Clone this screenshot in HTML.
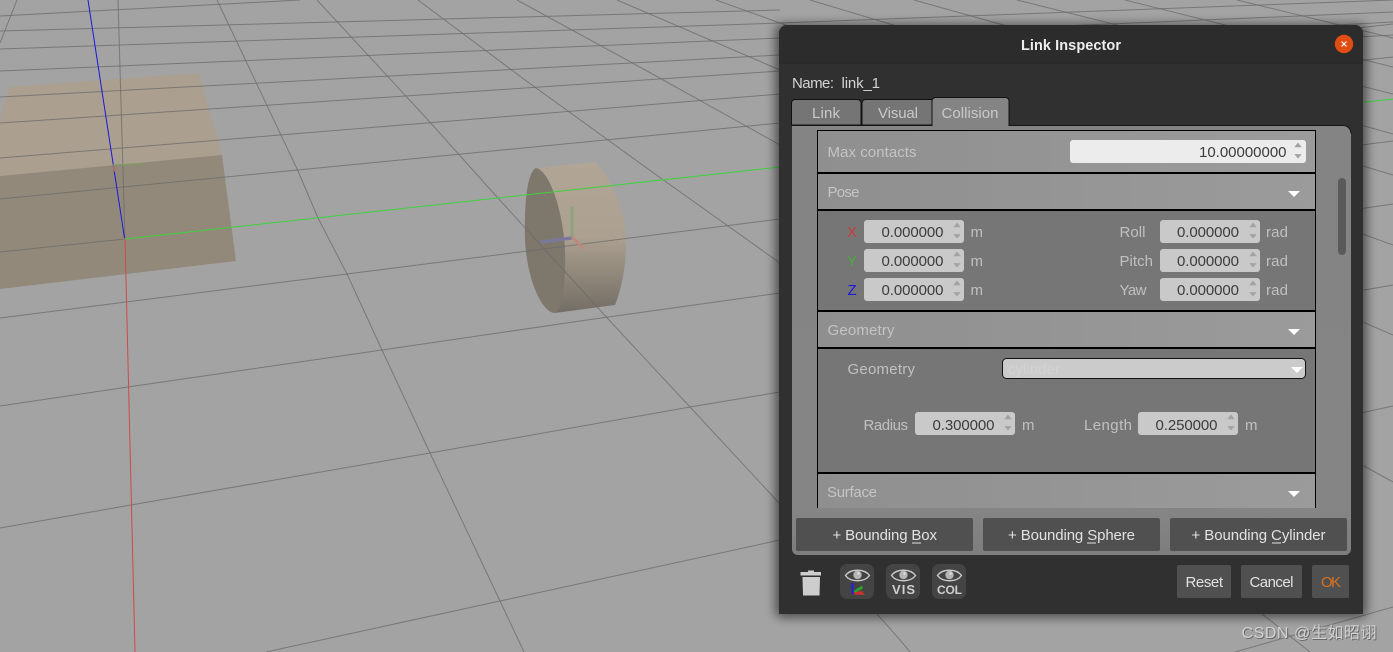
<!DOCTYPE html>
<html><head><meta charset="utf-8"><style>
html,body{margin:0;padding:0;background:#a3a3a3;overflow:hidden}
svg{display:block;position:absolute;left:0;top:0}
text{font-family:"Liberation Sans","Noto Sans CJK SC",sans-serif;font-size:15px}
</style></head><body>
<svg width="1393" height="652" viewBox="0 0 1393 652" xmlns="http://www.w3.org/2000/svg">
<defs>
<linearGradient id="cyl" x1="0" y1="0" x2="0" y2="1"><stop offset="0" stop-color="#b1a595"/><stop offset=".5" stop-color="#aca090"/><stop offset=".78" stop-color="#8c8477"/><stop offset="1" stop-color="#736d65"/></linearGradient>
<linearGradient id="hd" x1="0" y1="0" x2="1" y2="0"><stop offset="0" stop-color="#8f8f8f"/><stop offset="1" stop-color="#9b9b9b"/></linearGradient>
<linearGradient id="pane" x1="0" y1="0" x2="0" y2="1"><stop offset="0" stop-color="#848484"/><stop offset=".9" stop-color="#858585"/><stop offset="1" stop-color="#7d7d7d"/></linearGradient>
<filter id="blur" x="-10%" y="-10%" width="120%" height="120%"><feGaussianBlur stdDeviation="5"/></filter>
<g id="ar"><polygon points="-3.7,-4.3 3.7,-4.3 0,-9" fill="#a2a2a2"/><polygon points="-3.7,2.6 3.7,2.6 0,7" fill="#a2a2a2"/></g>
<polygon id="tri" points="-6,0 6,0 0,6" fill="#fff"/>
<g id="eye"><path d="M-12,0C-7,-7 7,-7 12,0C7,7 -7,7 -12,0Z" fill="none" stroke="#c9c9c9" stroke-width="1.4"/><circle cx="0" cy="-.5" r="4.2" fill="#b5b5b5"/><circle cx="1" cy="-2" r="1.2" fill="#e2e2e2"/></g>
</defs>

<rect width="1393" height="652" fill="#a3a3a3"/>

<!-- box -->
<polygon points="9,87 199,73 222,155 0,176 0,119" fill="#ab9f8f"/>
<polygon points="222,155 236,261 0,289 0,176" fill="#93897b"/>

<!-- cylinder -->
<path d="M536,168L595,162C611,178 626,212 626,242C626,268 621,290 615,305L555,313Z" fill="url(#cyl)"/>
<path d="M536,168C527,172 524,205 525,240C527,280 542,313 555,313C563,310 566,280 565,250C563,210 549,170 536,168Z" fill="#7e776c"/>

<!-- grid -->
<g stroke="#6a6a6a" stroke-width="1" stroke-opacity=".75" fill="none">
<path d="M0,16L300,0"/>
<path d="M0,31L780,10"/>
<path d="M0,49L780,23L1393,0"/>
<path d="M0,71L780,38L1393,12"/>
<path d="M0,97L780,55L1393,22"/>
<path d="M0,123L780,71L1393,35"/>
<path d="M0,158L780,94L1393,24"/>
<path d="M0,199L780,123L1393,57"/>
<path d="M0,252L125,239"/>
<path d="M0,318L126,302L347,274L780,219L1393,141"/>
<path d="M0,406L128,387L382,350L587,320L780,293L1393,204"/>
<path d="M0,528L131,505L430,453L690,407L780,392L1393,285"/>
<path d="M266,652L500,601L780,540L1393,406"/>
<path d="M1235,652L1393,607"/>
<path d="M118,0L125,239"/>
<path d="M17,0L0,43"/>
<path d="M217,0L298,171L318,218L347,274L382,350L430,453L500,601L524,652"/>
<path d="M317,0L428,120L497,197L609,320L690,407L780,504L900,640L910,652"/>
<path d="M418,0L525,80L662,179L780,263L1252,606L1310,652"/>
<path d="M517,0L647,71L746,126L780,145L1393,482"/>
<path d="M617,0L780,70L1393,335"/>
<path d="M716,0L780,23L1393,245"/>
<path d="M810,0L1393,175"/>
<path d="M914,0L1393,134"/>
<path d="M1017,0L1393,94"/>
<path d="M1125,0L1393,67"/>
<path d="M1237,0L1393,38"/>
</g>

<!-- axes -->
<path d="M88,0L124.5,238" stroke="#1818e0" stroke-width="1" fill="none"/>
<path d="M125,238L135,652" stroke="#cf4a4a" stroke-width="1" fill="none"/>
<path d="M125,239L780,167L1393,99" stroke="#3ed23e" stroke-width="1" fill="none"/>
<path d="M113,165L142,164" stroke="#7f9a64" stroke-width="1.5"/>
<path d="M113,166L115,172" stroke="#b36a60" stroke-width="1.2"/>
<path d="M572,206L572,237" stroke="#8ea27c" stroke-width="3"/>
<path d="M541,242L572,238" stroke="#7a789c" stroke-width="3.2"/>
<path d="M572,237L584,249" stroke="#bb8a7c" stroke-width="3"/>

<!-- dialog shadow and body -->
<rect x="775" y="24" width="592" height="594" rx="8" fill="#000" opacity=".5" filter="url(#blur)"/>
<path d="M779,614V33a8,8 0 0 1 8,-8H1355a8,8 0 0 1 8,8V614Z" fill="#303030"/>
<path d="M779,63V33a8,8 0 0 1 8,-8H1355a8,8 0 0 1 8,8V63Z" fill="#2c2c2c"/>
<rect x="779" y="62.500" width="584" height="1" fill="#262626"/>
<text x="1021" y="50" textLength="100" fill="#eeeeee" style="font-weight:bold;font-size:14.500px">Link Inspector</text>
<circle cx="1344" cy="44" r="9.200" fill="#e14c14"/>
<path d="M1341.500,41.500L1346.500,46.500M1346.500,41.500L1341.500,46.500" stroke="#fff" stroke-width="1.2"/>

<text x="792" y="88" textLength="42" fill="#d4d4d4">Name:</text>
<text x="841.500" y="88" textLength="38.500" fill="#d4d4d4">link_1</text>

<!-- tabs -->
<path d="M791.500,125V103a3.500,3.500 0 0 1 3.500,-3.500H857.500a3.500,3.500 0 0 1 3.500,3.500V125Z" fill="#757575" stroke="#111"/>
<path d="M862,125V103a3.500,3.500 0 0 1 3.500,-3.500H932V125Z" fill="#757575" stroke="#111"/>

<!-- pane -->
<path d="M792,125H1343a8,8 0 0 1 8,8V549a6,6 0 0 1 -6,6H798a6,6 0 0 1 -6,-6Z" fill="url(#pane)"/>
<path d="M792,125.500H1343a8,8 0 0 1 8,8" fill="none" stroke="#161616"/>
<path d="M932,125.500V101a3.500,3.500 0 0 1 3.500,-3.500H1005.500a3.500,3.500 0 0 1 3.500,3.500V125.500Z" fill="#848484" stroke="#111"/>
<rect x="932.500" y="124" width="76" height="3" fill="#848484"/>
<text x="812" y="118" textLength="28" fill="#c9c9c9">Link</text>
<text x="878" y="118" textLength="40" fill="#c9c9c9">Visual</text>
<text x="941.500" y="118" textLength="57" fill="#c9c9c9">Collision</text>

<!-- inner panels -->
<rect x="817" y="130" width="499" height="378" fill="#000"/>
<rect x="818" y="131" width="497" height="41" fill="url(#hd)"/>
<rect x="818" y="174" width="497" height="35" fill="url(#hd)"/>
<rect x="818" y="211" width="497" height="99" fill="#767676"/>
<rect x="818" y="312" width="497" height="35" fill="url(#hd)"/>
<rect x="818" y="349" width="497" height="123" fill="#767676"/>
<rect x="818" y="474" width="497" height="34" fill="url(#hd)"/>

<text x="827.500" y="157" textLength="89" fill="#c4c4c4">Max contacts</text>
<rect x="1070" y="140" width="236" height="23" rx="3" fill="#ececec"/>
<text x="1199" y="157" textLength="87.500" fill="#3c3c3c">10.00000000</text>
<use href="#ar" x="1298" y="151.500"/>

<text x="827.500" y="197" textLength="32" fill="#c4c4c4">Pose</text>
<use href="#tri" x="1294" y="191"/>

<!-- pose fields -->
<g fill="#c9c9c9">
<rect x="864" y="220" width="100" height="23" rx="3"/>
<rect x="864" y="249" width="100" height="23" rx="3"/>
<rect x="864" y="278" width="100" height="23" rx="3"/>
<rect x="1160" y="220" width="100" height="23" rx="3"/>
<rect x="1160" y="249" width="100" height="23" rx="3"/>
<rect x="1160" y="278" width="100" height="23" rx="3"/>
<rect x="915" y="412" width="100" height="23" rx="3"/>
<rect x="1138" y="412" width="100" height="23" rx="3"/>
</g>
<use href="#ar" x="957" y="231.500"/><use href="#ar" x="957" y="260.500"/><use href="#ar" x="957" y="289.500"/>
<use href="#ar" x="1253" y="231.500"/><use href="#ar" x="1253" y="260.500"/><use href="#ar" x="1253" y="289.500"/>
<use href="#ar" x="1008" y="423.500"/><use href="#ar" x="1231" y="423.500"/>

<g fill="#3c3c3c">
<text x="881.500" y="237" textLength="62">0.000000</text>
<text x="881.500" y="266" textLength="62">0.000000</text>
<text x="881.500" y="295" textLength="62">0.000000</text>
<text x="1177" y="237" textLength="62">0.000000</text>
<text x="1177" y="266" textLength="62">0.000000</text>
<text x="1177" y="295" textLength="62">0.000000</text>
<text x="932.500" y="430" textLength="62">0.300000</text>
<text x="1155.500" y="430" textLength="62">0.250000</text>
</g>

<text x="847" y="237" textLength="9.500" fill="#c93a3a">X</text>
<text x="847" y="266" textLength="9.500" fill="#47ad3f">Y</text>
<text x="847.500" y="295" textLength="8" fill="#1717dd">Z</text>

<g fill="#c0c0c0">
<text x="970.500" y="237" textLength="12">m</text>
<text x="970.500" y="266" textLength="12">m</text>
<text x="970.500" y="295" textLength="12">m</text>
<text x="1119.500" y="237" textLength="26">Roll</text>
<text x="1119.500" y="266" textLength="33.500">Pitch</text>
<text x="1119.500" y="295" textLength="27">Yaw</text>
<text x="1266" y="237" textLength="22">rad</text>
<text x="1266" y="266" textLength="22">rad</text>
<text x="1266" y="295" textLength="22">rad</text>
<text x="847.500" y="374" textLength="67.500">Geometry</text>
<text x="863.500" y="430" textLength="44.500">Radius</text>
<text x="1022" y="430" textLength="12">m</text>
<text x="1084" y="430" textLength="48">Length</text>
<text x="1245" y="430" textLength="12">m</text>
</g>

<text x="827.500" y="335" textLength="67" fill="#c4c4c4">Geometry</text>
<use href="#tri" x="1294" y="329"/>

<rect x="1002.500" y="358.500" width="303" height="20" rx="4" fill="#cbcbcb" stroke="#111"/>
<text x="1008" y="374" textLength="52" fill="#d2d2d2">cylinder</text>
<polygon points="1291,367 1303,367 1297,373" fill="#fff"/>

<text x="827" y="497" textLength="50" fill="#c4c4c4">Surface</text>
<use href="#tri" x="1294" y="491"/>

<!-- scrollbar -->
<rect x="1338" y="178" width="8" height="77" rx="4" fill="#5a5a5a"/>

<!-- bounding buttons -->
<g fill="#505050">
<rect x="796" y="518" width="177" height="33" rx="2"/>
<rect x="983" y="518" width="177" height="33" rx="2"/>
<rect x="1170" y="518" width="177" height="33" rx="2"/>
</g>
<g fill="#e2e2e2">
<text x="832.500" y="540" textLength="104.500">+ Bounding Box</text>
<text x="1008" y="540" textLength="127">+ Bounding Sphere</text>
<text x="1191.500" y="540" textLength="134">+ Bounding Cylinder</text>
<rect x="912" y="542.500" width="9" height="1"/>
<rect x="1087" y="542.500" width="9" height="1"/>
<rect x="1272" y="542.500" width="9" height="1"/>
</g>

<!-- trash -->
<path d="M808,570.500h6v1.500h7v3.500h-20.500v-3.500h7.500Z" fill="#cdcdcd"/>
<path d="M802.500,577H820L819.500,595.500H803Z" fill="#cdcdcd"/>

<!-- eye buttons -->
<g fill="#444444">
<rect x="840" y="564" width="34" height="35" rx="7"/>
<rect x="886" y="564" width="34" height="35" rx="7"/>
<rect x="932" y="564" width="34" height="35" rx="7"/>
</g>
<use href="#eye" x="857.500" y="575.500"/>
<use href="#eye" x="903.500" y="575.500"/>
<use href="#eye" x="949.500" y="575.500"/>
<path d="M852.500,583V594" stroke="#2020e0" stroke-width="2"/>
<polygon points="853.500,591 862,585.500 863,588.500 855,593" fill="#2ca02c"/>
<polygon points="853.500,592.500 862,591 865,595 854,594.500" fill="#cc2f2f"/>
<text x="892" y="594" textLength="23" fill="#cfcfcf" style="font-weight:bold;font-size:13px">VIS</text>
<text x="937" y="594" textLength="25" fill="#cfcfcf" style="font-weight:bold;font-size:12px">COL</text>

<!-- action buttons -->
<g fill="#505050">
<rect x="1177" y="565" width="54" height="33" rx="2"/>
<rect x="1241" y="565" width="61" height="33" rx="2"/>
<rect x="1312" y="565" width="37" height="33" rx="2"/>
</g>
<text x="1185.500" y="587" textLength="37.500" fill="#e2e2e2">Reset</text>
<text x="1249.500" y="587" textLength="44" fill="#e2e2e2">Cancel</text>
<text x="1321" y="587" textLength="20" fill="#d9701f">OK</text>

<!-- watermark -->
<text x="1242.500" y="639" textLength="135" fill="#3a3a3a" fill-opacity=".55" style="font-size:16px">CSDN @生如昭诩</text>
<text x="1241.500" y="638" textLength="135" fill="#d2d2d2" style="font-size:16px">CSDN @生如昭诩</text>
</svg>
</body></html>
